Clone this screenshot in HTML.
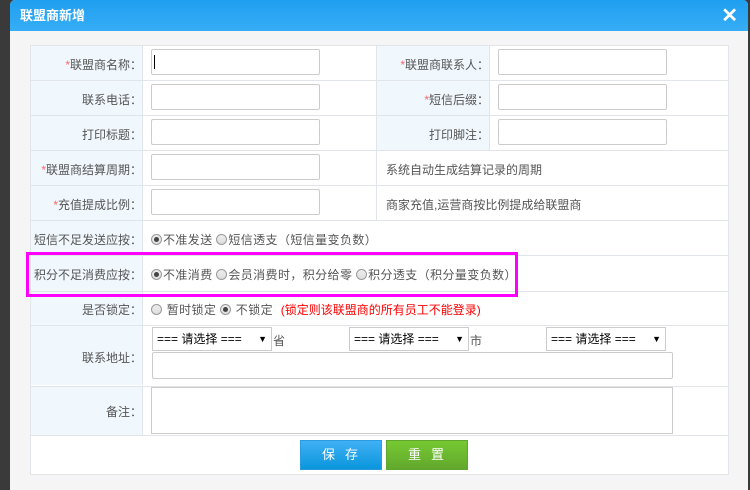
<!DOCTYPE html>
<html><head><meta charset="utf-8"><style>
*{box-sizing:border-box;margin:0;padding:0}
body{width:750px;height:490px;background:#3a3a3a;position:relative;overflow:hidden;font-family:"Liberation Sans","Noto Sans CJK SC",sans-serif;font-size:12px;color:#555}
.dlg{position:absolute;left:10px;top:0;width:738px;height:490px;background:#f5f5f5;border-radius:5px 5px 0 0;overflow:hidden}
.hd{position:absolute;left:0;top:0;width:738px;height:31px;background:linear-gradient(#1f9ff0,#37adf6);color:#fff;font-weight:bold;font-size:13px;line-height:31px;padding-left:10px}
.x{position:absolute;right:10px;top:3px;color:#fff;font-size:20px;font-weight:bold}
.a{position:absolute;white-space:nowrap}
.tb{position:absolute;left:30px;top:45px;width:699px;height:430px;background:#fff;border:1px solid #e1e4e8}
.lab{position:absolute;background:#f0f7fd;border-right:1px solid #e1e4e8}
.hl{position:absolute;left:30px;width:699px;height:1px;background:#e1e4e8}
.in{position:absolute;width:169px;height:26px;border:1px solid #ccc;border-radius:2px;background:#fff}
.s{color:#f66}
.L{position:absolute;white-space:nowrap;right:608px}
.R{position:absolute;white-space:nowrap;right:261px}
.r{display:inline-block;width:11px;height:11px;border:1px solid #999;border-radius:50%;background:linear-gradient(#eee,#ddd);vertical-align:-1px;position:relative;margin-right:1px}
.r.on:after{content:"";position:absolute;left:2px;top:2px;width:5px;height:5px;border-radius:50%;background:#444}
.rt{letter-spacing:0.4px}
.sel{position:absolute;height:24px;border:1px solid #ccc;background:#fff;color:#000;font-size:12px;line-height:22px;padding-left:4px;width:120px}
.sel:after{content:"▼";position:absolute;right:4px;top:0;font-size:9px}
</style></head><body>
<div class="dlg">
<div class="hd">联盟商新增</div><div class="x">✕</div>
</div>
<div class="tb"></div>
<div class="lab" style="left:31px;top:46px;width:112px;height:339px"></div>
<div class="lab" style="left:376px;top:46px;width:114px;height:104px;border-left:1px solid #e1e4e8"></div>
<div class="a" style="left:376px;top:150px;width:1px;height:70px;background:#e1e4e8"></div>
<div class="lab" style="left:31px;top:386px;width:112px;height:49px"></div>
<div class="hl" style="top:80px"></div><div class="hl" style="top:115px"></div><div class="hl" style="top:150px"></div><div class="hl" style="top:185px"></div><div class="hl" style="top:220px"></div><div class="hl" style="top:255px"></div><div class="hl" style="top:291px"></div><div class="hl" style="top:325px"></div><div class="hl" style="top:386px"></div><div class="hl" style="top:435px"></div>
<div class="L" style="top:56px"><span class="s">*</span>联盟商名称：</div>
<div class="L" style="top:91px">联系电话：</div>
<div class="L" style="top:126px">打印标题：</div>
<div class="L" style="top:161px"><span class="s">*</span>联盟商结算周期：</div>
<div class="L" style="top:196px"><span class="s">*</span>充值提成比例：</div>
<div class="L" style="top:231px">短信不足发送应按：</div>
<div class="L" style="top:266px">积分不足消费应按：</div>
<div class="L" style="top:301px">是否锁定：</div>
<div class="L" style="top:349px">联系地址：</div>
<div class="L" style="top:403px">备注：</div>
<div class="R" style="top:56px"><span class="s">*</span>联盟商联系人：</div>
<div class="R" style="top:91px"><span class="s">*</span>短信后缀：</div>
<div class="R" style="top:126px">打印脚注：</div>
<div class="a" style="left:386px;top:161px">系统自动生成结算记录的周期</div>
<div class="a" style="left:386px;top:196px">商家充值,运营商按比例提成给联盟商</div>
<div class="in" style="left:151px;top:49px"><div style="position:absolute;left:2px;top:5px;width:1px;height:14px;background:#000"></div></div>
<div class="in" style="left:151px;top:84px"></div>
<div class="in" style="left:151px;top:119px"></div>
<div class="in" style="left:151px;top:154px"></div>
<div class="in" style="left:151px;top:189px"></div>
<div class="in" style="left:498px;top:49px"></div>
<div class="in" style="left:498px;top:84px"></div>
<div class="in" style="left:498px;top:119px"></div>
<div class="a rt" style="left:151px;top:231px"><span class="r on"></span>不准发送 <span class="r"></span>短信透支（短信量变负数）</div>
<div class="a rt" style="left:151px;top:266px"><span class="r on"></span>不准消费 <span class="r"></span>会员消费时，积分给零 <span class="r"></span>积分透支（积分量变负数）</div>
<div class="a rt" style="left:151px;top:301px"><span class="r"></span> 暂时锁定 <span class="r on"></span> 不锁定 <span style="color:#f00;margin-left:4px;letter-spacing:0">(锁定则该联盟商的所有员工不能登录)</span></div>
<div class="a" style="left:26px;top:252px;width:492px;height:45px;border:3px solid #f0f"></div>
<div class="sel" style="left:152px;top:327px">=== 请选择 ===</div><div class="a" style="left:273px;top:332px">省</div>
<div class="sel" style="left:349px;top:327px">=== 请选择 ===</div><div class="a" style="left:470px;top:332px">市</div>
<div class="sel" style="left:546px;top:327px">=== 请选择 ===</div>
<div class="in" style="left:152px;top:352px;width:521px;height:27px"></div>
<div class="in" style="left:151px;top:387px;width:522px;height:47px;border-radius:0"></div>
<div class="a" style="left:300px;top:440px;width:82px;height:30px;background:linear-gradient(#40b0f5,#0a96dc);border:1px solid #2a9be0;color:#fff;font-size:13px;text-align:center;line-height:28px;letter-spacing:10px;padding-left:8px">保存</div>
<div class="a" style="left:386px;top:440px;width:82px;height:30px;background:linear-gradient(#76c932,#62a82d);border:1px solid #5fa52e;color:#fff;font-size:13px;text-align:center;line-height:28px;letter-spacing:10px;padding-left:8px">重置</div>
</body></html>
